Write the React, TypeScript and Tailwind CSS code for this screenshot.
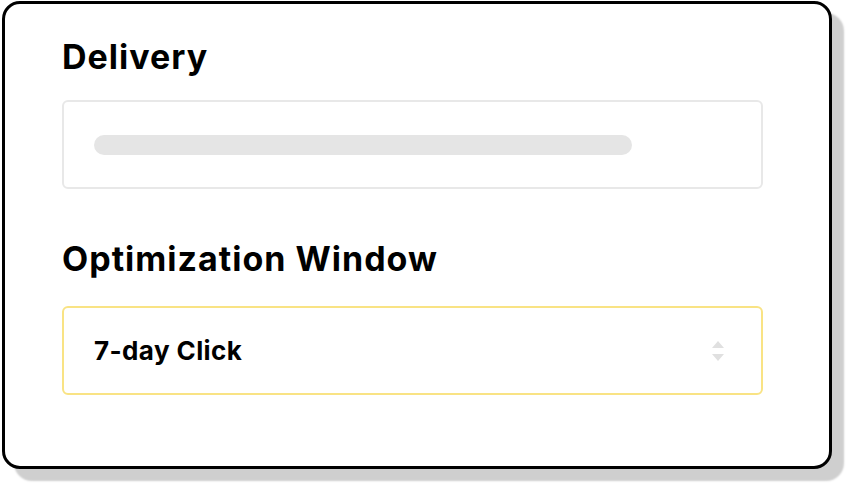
export default function App() {
  return (
    <main className="h-[483px] w-[847px] bg-white pl-[2px] pt-[1px] font-['Inter',sans-serif]">
      <section className="flex h-[468px] w-[830px] flex-col rounded-[18px] border-[3px] border-black bg-white pl-[57px] pt-[33px] shadow-[12px_12px_2px_#cfcfcf]">
        <h2 className="text-[34px] font-bold leading-[40px] tracking-[1px] text-black">
          Delivery
        </h2>
        <div className="mt-[23px] flex h-[89px] w-[701px] items-center rounded-[6px] border-2 border-[#e8e8e8] pl-[30px]">
          <div className="h-[20px] w-[538px] rounded-full bg-[#e5e5e5]" />
        </div>
        <h2 className="mt-[50px] text-[34px] font-bold leading-[40px] tracking-[1px] text-black">
          Optimization Window
        </h2>
        <div className="mt-[27px] flex h-[89px] w-[701px] items-center justify-between rounded-[6px] border-[2.5px] border-[#f9e384] pl-[30px] pr-[36px]">
          <span className="text-[26px] font-bold tracking-[0.4px] text-black">7-day Click</span>
          <svg width="14" height="22" viewBox="0 0 14 22" className="text-[#e0e0e0]">
            <path d="M7 1 L13 8 H1 Z" fill="currentColor" />
            <path d="M7 21 L13 14 H1 Z" fill="currentColor" />
          </svg>
        </div>
      </section>
    </main>
  );
}
